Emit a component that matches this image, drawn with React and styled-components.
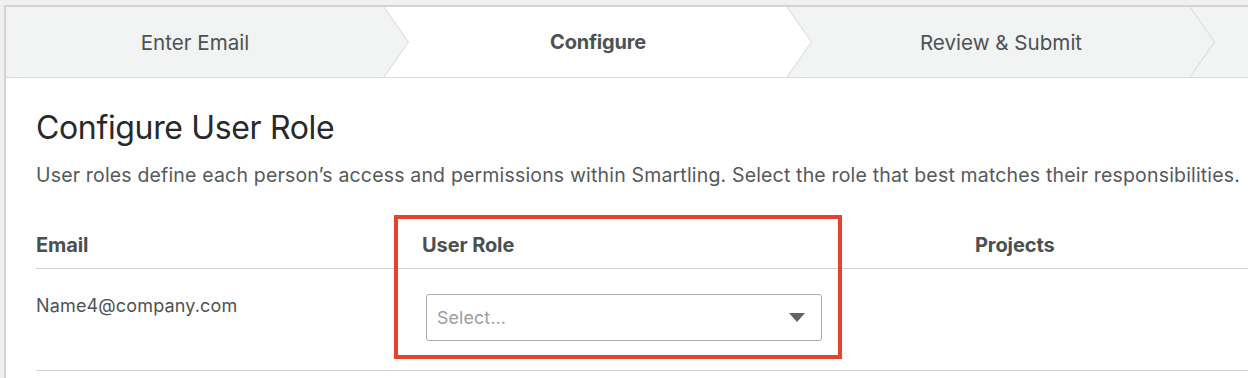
import React from 'react'
import styled, { createGlobalStyle } from 'styled-components'

const GlobalStyle = createGlobalStyle`
  html, body {
    margin: 0;
    padding: 0;
    background: #f0f0f0;
    font-family: "Inter", "Roboto", "Liberation Sans", sans-serif;
    -webkit-font-smoothing: antialiased;
  }
`

const ARROW = 25

const Page = styled.div`
  padding: 5px 0 0 4px;
  height: 373px;
  overflow: hidden;
`

const Frame = styled.div`
  background: #fff;
  border-top: 2px solid #d3d3d3;
  border-left: 2px solid #d3d3d3;
  height: 100%;
`

/** step bar */
const Stepper = styled.div`
  display: flex;
  height: 70px;
  border-bottom: 1px solid #dadada;
  overflow: hidden;
`

const Step = styled.div`
  position: relative;
  flex: 0 0 ${p => (p.$first ? 378 : 403)}px;
  display: flex;
  align-items: center;
  justify-content: center;
  padding-left: ${p => (p.$first ? 0 : ARROW)}px;
  box-sizing: border-box;
  background: ${p => (p.$active ? '#fff' : '#f2f3f3')};
  color: #4d5253;
  font-size: ${p => (p.$active ? 20 : 20.6)}px;
  font-weight: ${p => (p.$active ? 700 : 400)};
  letter-spacing: ${p => (p.$active ? -0.2 : 0)}px;
`

const Tip = styled.svg`
  position: absolute;
  top: 0;
  left: 100%;
  z-index: 1;
  display: block;
`

const Body = styled.div`
  padding: 30px 0 0 30px;
`

const Title = styled.h1`
  margin: 0;
  font-size: 32px;
  line-height: 40px;
  font-weight: 400;
  color: #262a2b;
  letter-spacing: -0.35px;
`

const Lead = styled.p`
  margin: 15px 0 0;
  font-size: 19.5px;
  line-height: 24px;
  letter-spacing: 0.17px;
  color: #54595a;
  white-space: nowrap;
`

const Table = styled.div`
  position: relative;
  margin-top: 46px;
`

const Row = styled.div`
  display: grid;
  grid-template-columns: 386px 553px 1fr;
  border-bottom: 1px solid #cfd1d1;
  height: ${p => p.$h}px;
`

const HeadCell = styled.div`
  font-size: 20px;
  font-weight: 700;
  color: #4a4f50;
  line-height: 24px;
  letter-spacing: -0.1px;
`

const Cell = styled.div`
  padding-top: 25px;
  font-size: 18px;
  line-height: 24px;
  letter-spacing: 0.15px;
  color: #4d5253;
`

const SelectBox = styled.div`
  margin: 0 0 0 4px;
  width: 396px;
  height: 47px;
  box-sizing: border-box;
  border: 1.5px solid #a9acad;
  border-radius: 3px;
  display: flex;
  align-items: center;
  justify-content: space-between;
  padding: 0 16px 0 10px;
  color: #9a9e9f;
  font-size: 17.8px;
`

const Highlight = styled.div`
  position: absolute;
  left: 358px;
  top: -18px;
  width: 448px;
  height: 144px;
  box-sizing: border-box;
  border: 4.5px solid #e6432c;
  pointer-events: none;
`

const steps = [
  { label: 'Enter Email' },
  { label: 'Configure', active: true },
  { label: 'Review & Submit' },
  { label: '' },
]

const StepTip = ({ active }) => (
  <Tip width={ARROW} height="70" viewBox={`0 0 ${ARROW} 70`}>
    <polygon points={`0,0 ${ARROW - 0.5},35 0,70`} fill={active ? '#fff' : '#f2f3f3'} />
    <polyline points={`0,0 ${ARROW - 0.5},35 0,70`} fill="none" stroke="#d6d8d8" strokeWidth="1" />
  </Tip>
)

const Caret = () => (
  <svg width="16" height="9" viewBox="0 0 16 9">
    <polygon points="0,0 16,0 8,9" fill="#5f6566" />
  </svg>
)

export default function App() {
  return (
    <>
      <GlobalStyle />
      <Page>
        <Frame>
          <Stepper>
            {steps.map((s, i) => (
              <Step key={i} $first={i === 0} $active={s.active}>
                {s.label}
                <StepTip active={s.active} />
              </Step>
            ))}
          </Stepper>
          <Body>
            <Title>Configure User Role</Title>
            <Lead>
              User roles define each person’s access and permissions within Smartling. Select the role that best matches their responsibilities.
            </Lead>
            <Table>
              <Row $h={35}>
                <HeadCell>Email</HeadCell>
                <HeadCell>User Role</HeadCell>
                <HeadCell>Projects</HeadCell>
              </Row>
              <Row $h={101}>
                <Cell>Name4@company.com</Cell>
                <Cell>
                  <SelectBox>
                    <span>Select...</span>
                    <Caret />
                  </SelectBox>
                </Cell>
                <Cell />
              </Row>
              <Highlight />
            </Table>
          </Body>
        </Frame>
      </Page>
    </>
  )
}
